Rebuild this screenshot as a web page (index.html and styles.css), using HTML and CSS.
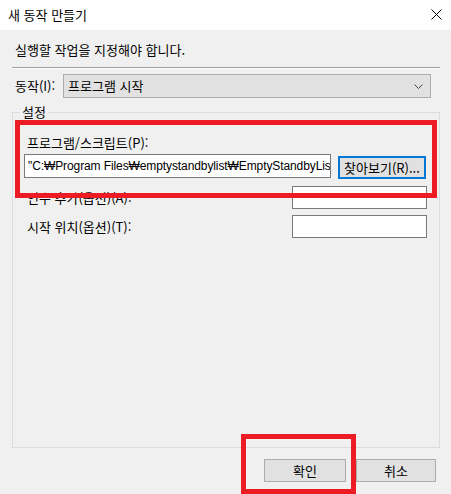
FILE: index.html
```html
<!DOCTYPE html>
<html lang="ko">
<head>
<meta charset="utf-8">
<link rel="stylesheet" href="styles.css">
</head>
<body>
<div class="window">
  <div class="titlebar">
    <span class="title">새 동작 만들기</span>
    <svg class="close" width="11" height="11" viewBox="0 0 11 11"><path d="M0.5 0.5 L10.5 10.5 M10.5 0.5 L0.5 10.5" stroke="#000" stroke-width="1" fill="none"/></svg>
  </div>
  <div class="main">
    <div class="instr">실행할 작업을 지정해야 합니다.</div>
    <div class="sep"></div>
    <div class="action-row">
      <span class="action-label">동작(I):</span>
      <div class="combo">
        <span>프로그램 시작</span>
        <svg class="chev" width="9" height="5" viewBox="0 0 9 5"><path d="M0.5 0.5 L4.5 4.5 L8.5 0.5" stroke="#444" stroke-width="1" fill="none"/></svg>
      </div>
    </div>
    <fieldset class="group">
      <legend>설정</legend>
      <div class="lbl prog-lbl">프로그램/스크립트(P):</div>
      <div class="prog-row">
        <div class="input prog-input">"C:₩Program Files₩emptystandbylist₩EmptyStandbyList.exe"</div>
        <div class="btn browse">찾아보기(R)...</div>
      </div>
      <div class="opt-row first">
        <span class="lbl">인수 추가(옵션)(A):</span>
        <div class="input small"></div>
      </div>
      <div class="opt-row second">
        <span class="lbl">시작 위치(옵션)(T):</span>
        <div class="input small"></div>
      </div>
    </fieldset>
    <div class="buttons">
      <div class="btn ok">확인</div>
      <div class="btn cancel">취소</div>
    </div>
  </div>
  <div class="mark mark-prog"></div>
  <div class="mark mark-ok"></div>
</div>
</body>
</html>
```
FILE: styles.css
```css
* { box-sizing: border-box; }
html, body { margin: 0; padding: 0; }
body {
  width: 451px;
  height: 494px;
  overflow: hidden;
  background: #f0f0f0;
  font-family: "Noto Sans CJK KR", "Noto Sans", sans-serif;
  font-size: 13px;
  color: #000;
}
.window { position: relative; width: 451px; height: 494px; }
.titlebar {
  height: 30px;
  background: #fff;
  display: flex;
  align-items: center;
  justify-content: space-between;
  padding: 0 9px 0 8px;
}
.title { font-size: 13px; line-height: 16px; }
.close { display: block; margin-top: -1px; }
.main { padding: 0 11px 0 12px; }
.instr { padding: 12px 0 0 3px; line-height: 16px; height: 37px; }
.sep {
  height: 2px;
  border-top: 1px solid #a0a0a0;
  border-bottom: 1px solid #fff;
  width: 428px;
}
.action-row {
  display: flex;
  align-items: center;
  margin-top: 5px;
  height: 24px;
}
.action-label { width: 51px; padding-left: 3px; line-height: 16px; }
.combo {
  width: 368px;
  height: 24px;
  background: #e1e1e1;
  border: 1px solid #adadad;
  display: flex;
  align-items: center;
  justify-content: space-between;
  padding: 0 7px 0 4px;
  line-height: 16px;
}
.chev { display: block; }
.group {
  margin: 6px 0 0 0;
  width: 428px;
  height: 344px;
  border: 1px solid #dcdcdc;
  padding: 0 12px 0 11px;
}
.group legend {
  padding: 0 2px;
  margin-left: -4px;
  line-height: 16px;
}
.lbl { padding-left: 3px; line-height: 16px; }
.prog-lbl { margin-top: 15px; }
.prog-row {
  display: flex;
  align-items: flex-start;
  margin-top: 3px;
}
.input {
  background: #fff;
  border: 1px solid #7a7a7a;
}
.prog-input {
  width: 307px;
  height: 24px;
  padding: 0 3px;
  font-family: "Liberation Sans", "Noto Sans", sans-serif;
  font-size: 12px;
  letter-spacing: -0.1px;
  line-height: 22px;
  white-space: nowrap;
  overflow: hidden;
}
.btn {
  background: #e1e1e1;
  border: 1px solid #adadad;
  display: flex;
  align-items: center;
  justify-content: center;
  line-height: 16px;
}
.browse {
  width: 88px;
  height: 23px;
  margin: 2px 0 0 7px;
  border: 2px solid #0078d7;
  white-space: nowrap;
}
.opt-row {
  display: flex;
  align-items: center;
  justify-content: space-between;
  width: 403px;
}
.opt-row.first { margin-top: 7px; }
.opt-row.second { margin-top: 6px; }
.input.small { width: 135px; height: 23px; }
.buttons {
  display: flex;
  justify-content: flex-end;
  gap: 10px;
  margin-top: 11px;
  padding-right: 4px;
}
.ok { width: 82px; height: 23px; }
.cancel { width: 80px; height: 23px; }
.mark {
  position: absolute;
  border: 5px solid #ed1c24;
}
.mark-prog { left: 15px; top: 120px; width: 422px; height: 78px; }
.mark-ok { left: 241px; top: 434px; width: 115px; height: 60px; }
```
